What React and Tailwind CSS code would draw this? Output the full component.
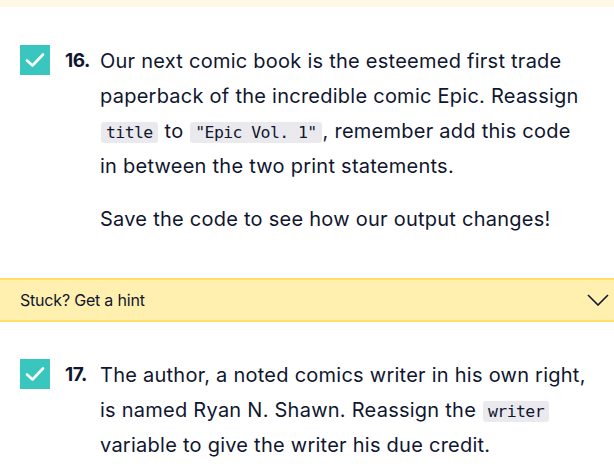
import React from 'react';

function Check() {
  return (
    <div className="w-[30px] h-[30px] shrink-0 bg-[#38c6bf] flex items-center justify-center">
      <svg width="20" height="16" viewBox="0 0 20 16" fill="none">
        <path d="M2 8.5 L7.5 13.5 L18 2.5" stroke="white" strokeWidth="2.6" strokeLinecap="round" strokeLinejoin="round" />
      </svg>
    </div>
  );
}

function Code({ children }) {
  return (
    <code className="bg-[#eaeaee] text-[#10162f] rounded-[3px] px-[5px] py-[1px] text-[16.5px] leading-[16px] font-['DejaVu_Sans_Mono',monospace] tracking-[-0.6px] mx-[1px]">
      {children}
    </code>
  );
}

function Step({ num, children }) {
  return (
    <div className="flex pl-5 pr-6">
      <div className="pt-[1px]">
        <Check />
      </div>
      <div className="w-[50px] shrink-0 pl-[15px] pt-[3px] font-bold text-[19px] leading-[28px] tracking-[-0.5px]">{num}.</div>
      <div className="flex-1 text-[20px] leading-[35px]">{children}</div>
    </div>
  );
}

export default function App() {
  return (
    <div className="w-[614px] h-[474px] bg-white overflow-hidden text-[#10162f] font-['Inter',sans-serif] tracking-[0.25px]">
      <div className="h-[7px] bg-[#fff8e6]" />
      <div className="pt-[37px]">
        <Step num="16">
          <p>
            Our next comic book is the esteemed first trade paperback of the incredible comic Epic. Reassign{' '}
            <Code>title</Code> to <Code>"Epic Vol. 1"</Code>, remember add this code in between the two print statements.
          </p>
          <p className="mt-[18px]">Save the code to see how our output changes!</p>
        </Step>
      </div>
      <div className="mt-[41px] h-[44px] bg-[#fff0b0] border-y-2 border-[#ffe066] flex items-center justify-between pl-5 pr-[5px]">
        <span className="text-[16px] tracking-[-0.2px]">Stuck? Get a hint</span>
        <svg width="22" height="12" viewBox="0 0 22 12" fill="none">
          <path d="M1 1 L11 11 L21 1" stroke="#10162f" strokeWidth="1.6" />
        </svg>
      </div>
      <div className="pt-[36px]">
        <Step num="17">
          <p>
            The author, a noted comics writer in his own right, is named Ryan N. Shawn. Reassign the{' '}
            <Code>writer</Code> variable to give the writer his due credit.
          </p>
        </Step>
      </div>
    </div>
  );
}
